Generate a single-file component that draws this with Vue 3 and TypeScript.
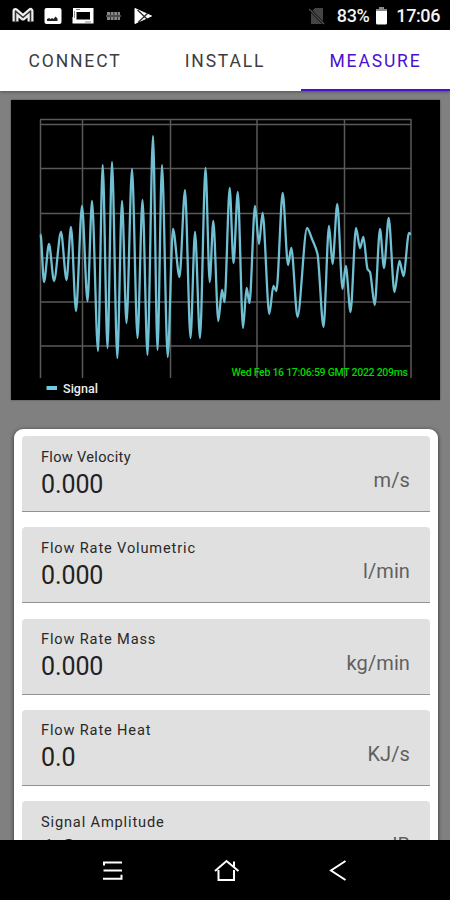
<script setup lang="ts">
interface Reading {
  label: string
  value: string
  unit: string
  tracking: string
}

type Point = [number, number]

const tabs: string[] = ['Connect', 'Install', 'Measure']
const activeTab = 'Measure'

const readings: Reading[] = [
  { label: 'Flow Velocity', value: '0.000', unit: 'm/s', tracking: 'tight' },
  { label: 'Flow Rate Volumetric', value: '0.000', unit: 'l/min', tracking: 'wide' },
  { label: 'Flow Rate Mass', value: '0.000', unit: 'kg/min', tracking: 'wide' },
  { label: 'Flow Rate Heat', value: '0.0', unit: 'KJ/s', tracking: 'wide' },
  { label: 'Signal Amplitude', value: '1.0', unit: 'dB', tracking: 'wide' },
]

const gridRows: number[] = [19.5, 24.5, 68.5, 113.5, 158, 202, 246]
const gridColumns: number[] = [29.5, 71.5, 159.5, 246, 333.5, 400]

// Turning points of the trace, in chart coordinates
const samples: Point[] = [
  [29.5, 134], [33, 182], [38, 144], [43, 181], [50, 132], [55.5, 180], [60, 127], [65, 211],
  [71, 106], [76.5, 201], [81, 101], [87, 251], [91.7, 65], [96.5, 248], [101, 62], [106.3, 258],
  [111, 101], [115.5, 223], [121, 69], [126.5, 238], [131.5, 100], [136.5, 255], [142, 36],
  [146.5, 250], [151, 65], [156.7, 257], [162, 129], [168.5, 177], [174, 90], [179.5, 238],
  [184, 132], [189, 238], [194.5, 68], [198.7, 182], [202.3, 121], [207.3, 221], [211, 190],
  [213.5, 202], [218.7, 88], [222.5, 163], [226.8, 92], [232, 228], [235.6, 188], [238.5, 203],
  [244, 106], [248, 144], [251.6, 113], [258.3, 214], [262.4, 186], [265.4, 191], [271.7, 93],
  [277, 165], [280.3, 148], [286.5, 217], [296, 128], [301, 139], [306.5, 154], [312.5, 227],
  [318, 126], [321.5, 164], [326.3, 104], [331.5, 189], [334.8, 166], [339.5, 212], [345, 128],
  [349, 148], [352.4, 137], [356.5, 169], [359, 172], [363.7, 205], [369, 129], [373, 168],
  [377.7, 118], [383.4, 192], [388.5, 161], [392.5, 176], [398, 133], [400, 134],
]

function smoothPath(points: Point[]): string {
  const slope = (i: number): number => {
    if (i === 0 || i === points.length - 1) return 0
    const before = (points[i][1] - points[i - 1][1]) / (points[i][0] - points[i - 1][0])
    const after = (points[i + 1][1] - points[i][1]) / (points[i + 1][0] - points[i][0])
    return before * after <= 0 ? 0 : (2 * before * after) / (before + after)
  }
  return points.reduce((path, [x, y], i) => {
    if (i === 0) return `M${x} ${y}`
    const [px, py] = points[i - 1]
    const reach = (x - px) * 0.3
    return `${path}C${px + reach} ${py + slope(i - 1) * reach} ${x - reach} ${y - slope(i) * reach} ${x} ${y}`
  }, '')
}

const tracePath = smoothPath(samples)
</script>

<template>
  <div class="screen">
    <header class="status">
      <div class="notifications">
        <svg class="gmail" width="22" height="18" viewBox="0 0 22 18">
          <path d="M3.500 14.500V4l7.500 6.500L18.500 4v10.500" fill="none" stroke="#eee" stroke-width="6" stroke-linejoin="round" />
          <path d="M3.500 15.500V4l7.500 6.500L18.500 4v11.500" fill="none" stroke="#333" stroke-width="1.600" stroke-linejoin="round" />
        </svg>
        <svg class="photo" width="18" height="18" viewBox="0 0 18 18">
          <rect x="0.5" y="1" width="17" height="16" rx="2" fill="#fff" />
          <path d="M3 14v-2l2-1 1.500 1 1.500-1 1.500 1 2-2.500 2 2V14z" fill="#222" />
        </svg>
        <svg class="cast" width="22" height="18" viewBox="0 0 22 18">
          <path fill-rule="evenodd" d="M1 1h20.500v15.500H.5V10H1zM4.500 5v7.500h13.500V5z" fill="#fff" />
          <path d="M2.500 4v7M4 2.500h4M13 15h6" stroke="#888" stroke-width="1" />
        </svg>
        <svg class="badge" width="16" height="12" viewBox="0 0 16 12">
          <path d="M1 3.500h13M1 8.500h13" stroke="#888" stroke-width="3" stroke-dasharray="3 .6" />
          <path d="M0 6h15" stroke="#999" stroke-width="1" />
        </svg>
        <svg class="play" width="19" height="18" viewBox="0 0 19 18">
          <path d="M1 1.500L17.500 9 1 16.500z" fill="#fff" stroke="#fff" stroke-width="1" stroke-linejoin="round" />
          <path d="M3.500 3l10 9.500M4 15.500L14 6" stroke="#222" stroke-width="1.200" />
        </svg>
      </div>
      <div class="system">
        <svg class="no-sim" width="16" height="18" viewBox="0 0 16 18">
          <path d="M6 1h8v16H2V5z" fill="#444" />
          <path d="M.5 2.500l15 15" stroke="#000" stroke-width="2.500" />
          <path d="M0 2l15 15" stroke="#555" stroke-width="1.200" />
        </svg>
        <span class="percent">83%</span>
        <svg class="battery" width="13" height="20" viewBox="0 0 13 20">
          <path d="M4 1h5v2h2.500q.5 0 .5.500V17q0 1.500-1.500 1.500h-8Q1 18.500 1 17V3.500q0-.5.5-.5H4z" fill="#fff" />
          <path d="M4 1h5v2h3v2H1V3h3z" fill="#888" />
        </svg>
        <span class="clock">17:06</span>
      </div>
    </header>

    <nav class="tabs">
      <button v-for="tab in tabs" :key="tab" class="tab" :class="{ active: tab === activeTab }">{{ tab }}</button>
    </nav>

    <main class="content">
      <section class="chart">
        <svg width="429" height="300" viewBox="0 0 429 300">
          <g stroke="#595959" stroke-width="1.500">
            <line v-for="y in gridRows" :key="`r${y}`" x1="29" :y1="y" x2="400.500" :y2="y" />
            <line v-for="x in gridColumns" :key="`c${x}`" :x1="x" y1="19.500" :x2="x" y2="278" />
          </g>
          <path :d="tracePath" fill="none" stroke="#70bfd2" stroke-width="2.300" stroke-linejoin="round" />
          <text x="220.500" y="276" class="stamp" textLength="176.500">Wed Feb 16 17:06:59 GMT 2022 209ms</text>
          <rect x="35.500" y="286" width="10.500" height="4" fill="#6bcbe2" />
          <text x="52" y="293" class="legend" textLength="35">Signal</text>
        </svg>
      </section>

      <section class="card">
        <div v-for="reading in readings" :key="reading.label" class="field">
          <div class="reading">
            <span class="label" :class="reading.tracking">{{ reading.label }}</span>
            <span class="value">{{ reading.value }}</span>
          </div>
          <span class="unit">{{ reading.unit }}</span>
        </div>
      </section>
    </main>

    <footer class="system-nav">
      <svg width="22" height="22" viewBox="0 0 22 22" fill="none" stroke="#fff" stroke-width="2">
        <path d="M2 6.500V3.500H20M1.500 11.500H20M1 19.800h18.500v-4" />
      </svg>
      <svg width="26" height="24" viewBox="0 0 26 24" fill="none" stroke="#fff" stroke-width="2">
        <path d="M1 13L12.500 3l12 10M4.500 12v10h15.500V12M20 3.500v5" />
      </svg>
      <svg width="18" height="22" viewBox="0 0 18 22" fill="none" stroke="#fff" stroke-width="2">
        <path d="M16.500 2L2 11.500l14.500 9.500" />
      </svg>
    </footer>
  </div>
</template>

<style>
body {
  margin: 0;
  background: #000;
}
</style>

<style scoped>
.screen {
  display: flex;
  flex-direction: column;
  width: 450px;
  height: 900px;
  overflow: hidden;
  background: #808080;
  font-family: Roboto, sans-serif;
}
.status {
  display: flex;
  flex: none;
  align-items: center;
  justify-content: space-between;
  box-sizing: border-box;
  height: 30px;
  padding: 2px 10px 0 12px;
  background: #000;
  color: #f4f4f4;
}
.notifications,
.system {
  display: flex;
  align-items: center;
}
.photo {
  margin-left: 10px;
}
.cast {
  margin-left: 10px;
}
.badge {
  margin-left: 12px;
}
.play {
  margin-left: 12px;
}
.percent,
.clock {
  font-size: 18px;
  font-weight: 500;
  line-height: 24px;
}
.percent {
  margin-left: 12px;
  letter-spacing: -0.4px;
}
.battery {
  margin-left: 6px;
}
.clock {
  margin-left: 8px;
  letter-spacing: -0.4px;
}
.tabs {
  display: grid;
  flex: none;
  grid-template-columns: repeat(3, 1fr);
  height: 60.5px;
  background: #fff;
  box-shadow: 0 1px 3px rgba(0, 0, 0, 0.35);
}
.tab {
  padding: 3px 0 0;
  border: 0;
  border-bottom: 2px solid transparent;
  background: none;
  color: #3c3c3c;
  font: 400 17.5px/24px Roboto, sans-serif;
  letter-spacing: 1.85px;
  text-transform: uppercase;
}
.tab.active {
  margin-left: 1px;
  border-color: #4a0fd0;
  color: #4a0fd0;
}
.content {
  display: flex;
  flex: 1;
  flex-direction: column;
  gap: 28.5px;
  min-height: 0;
  padding: 9.5px 12px 0 11px;
  overflow: hidden;
}
.chart {
  flex: none;
  width: 429px;
  height: 300px;
  background: #000;
  box-shadow: 0 0 2px rgba(0, 0, 0, 0.4);
}
.chart svg {
  display: block;
}
.stamp {
  fill: #00d600;
  font-size: 10.5px;
  font-weight: 500;
}
.legend {
  fill: #eee;
  font-size: 12.5px;
  font-weight: 500;
}
.card {
  display: flex;
  flex: none;
  flex-direction: column;
  gap: 15.3px;
  margin: 0 0 0 2.5px;
  padding: 7.5px 8px;
  border-radius: 9px;
  background: #fff;
  box-shadow: 0 1px 4px rgba(0, 0, 0, 0.65);
}
.field {
  display: flex;
  align-items: center;
  justify-content: space-between;
  box-sizing: border-box;
  height: 76px;
  padding: 0 20px 0 19.5px;
  border-bottom: 1.5px solid #929292;
  border-radius: 4px 4px 0 0;
  background: #e0e0e0;
}
.reading {
  display: flex;
  flex-direction: column;
  padding-bottom: 1px;
}
.label {
  color: #292929;
  font-size: 14.6px;
  line-height: 20px;
}
.label.tight {
  letter-spacing: 0.3px;
}
.label.wide {
  letter-spacing: 0.85px;
}
.value {
  margin-top: 2px;
  color: #222;
  font-size: 25px;
  line-height: 31px;
  letter-spacing: -0.1px;
}
.unit {
  margin-top: 13px;
  color: #606060;
  font-size: 20px;
  line-height: 24px;
  letter-spacing: 0.1px;
}
.system-nav {
  display: flex;
  flex: none;
  align-items: center;
  justify-content: space-between;
  box-sizing: border-box;
  height: 60px;
  padding: 0 103px 0 102px;
  background: #000;
}
</style>
